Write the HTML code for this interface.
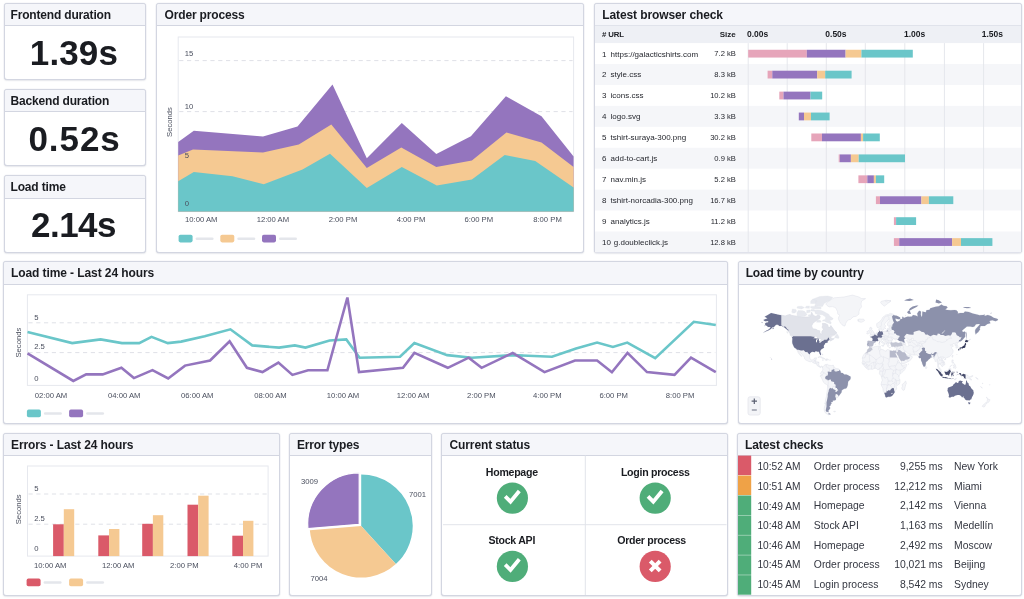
<!DOCTYPE html>
<html lang="en"><head><meta charset="utf-8"><title>Synthetic monitoring dashboard</title>
<style>
html,body{margin:0;padding:0;background:#fff}
body{width:1024px;height:599px;overflow:hidden;font-family:"Liberation Sans",sans-serif;color:#1a1c21}
#root{will-change:transform;position:relative;width:1024px;height:599px;overflow:hidden}
.p{position:absolute;box-sizing:border-box;border:1px solid #d3d6e1;border-radius:3px;background:#fff;box-shadow:0 0 1px rgba(150,156,185,.55),0 1px 1.5px rgba(120,125,150,.14)}
.ph{box-sizing:border-box;background:#f5f6fa;border-bottom:1px solid #d3d6e1;border-radius:2px 2px 0 0;padding-left:5.5px;display:flex;align-items:center}
.ph span{font-weight:bold;font-size:12px;color:#1a1c21;white-space:nowrap}
.t{position:absolute;white-space:nowrap}
svg{position:absolute;left:0;top:0;overflow:visible}

</style></head>
<body>
<div id="root">
<div class="p" style="left:4px;top:3px;width:142px;height:77px"><div class="ph" style="height:22px;padding-left:5.5px"><span style="letter-spacing:-0.17px">Frontend duration</span></div></div>
<div class="p" style="left:4px;top:89px;width:142px;height:77px"><div class="ph" style="height:22px;padding-left:5.5px"><span style="letter-spacing:-0.17px">Backend duration</span></div></div>
<div class="p" style="left:4px;top:175px;width:142px;height:78px"><div class="ph" style="height:22.5px;padding-left:5.5px"><span style="letter-spacing:-0.17px">Load time</span></div></div>
<div class="p" style="left:156px;top:3px;width:428px;height:250px"><div class="ph" style="height:22px;padding-left:7.6px"><span style="letter-spacing:-0.17px">Order process</span></div></div>
<div class="p" style="left:594px;top:3px;width:428px;height:250px"><div class="ph" style="height:22px;padding-left:7.2px"><span style="letter-spacing:-0.1px">Latest browser check</span></div></div>
<div class="p" style="left:3px;top:261px;width:725px;height:163px"><div class="ph" style="height:23px;padding-left:7px"><span style="letter-spacing:-0.09px">Load time - Last 24 hours</span></div></div>
<div class="p" style="left:738px;top:261px;width:284px;height:163px"><div class="ph" style="height:23px;padding-left:6.7px"><span style="letter-spacing:-0.17px">Load time by country</span></div></div>
<div class="p" style="left:3px;top:433px;width:277px;height:163px"><div class="ph" style="height:22px;padding-left:7px"><span style="letter-spacing:-0.11px">Errors - Last 24 hours</span></div></div>
<div class="p" style="left:289px;top:433px;width:143px;height:163px"><div class="ph" style="height:22px;padding-left:7px"><span style="letter-spacing:-0.17px">Error types</span></div></div>
<div class="p" style="left:441px;top:433px;width:287px;height:163px"><div class="ph" style="height:22px;padding-left:7.5px"><span style="letter-spacing:-0.1px">Current status</span></div></div>
<div class="p" style="left:737px;top:433px;width:285px;height:163px"><div class="ph" style="height:22px;padding-left:7px"><span style="letter-spacing:-0.08px">Latest checks</span></div></div>
<div class="t" style="left:-76.1px;width:300px;text-align:center;top:29.85px;font-size:35px;line-height:45.5px;font-weight:bold;color:#1a1c21;letter-spacing:0.1px;">1.39s</div>
<div class="t" style="left:-75.4px;width:300px;text-align:center;top:115.85px;font-size:35px;line-height:45.5px;font-weight:bold;color:#1a1c21;letter-spacing:0.95px;">0.52s</div>
<div class="t" style="left:-76.5px;width:300px;text-align:center;top:202.05px;font-size:35px;line-height:45.5px;font-weight:bold;color:#1a1c21;letter-spacing:-0.5px;">2.14s</div>
<svg width="1024" height="599" viewBox="0 0 1024 599" font-family="Liberation Sans, sans-serif"><rect x="178.2" y="37" width="395.40000000000003" height="174.6" fill="#fff" stroke="#e6e8ee" stroke-width="1"/>
<line x1="179.2" x2="572.6" y1="60.6" y2="60.6" stroke="#dfe1e7" stroke-width="1" stroke-dasharray="4.2 3.6"/>
<line x1="179.2" x2="572.6" y1="111.6" y2="111.6" stroke="#dfe1e7" stroke-width="1" stroke-dasharray="4.2 3.6"/>
<polygon points="178.2,142.0 193.8,130.8 263.0,136.5 297.5,126.5 332.5,84.5 366.8,158.3 401.8,123.0 436.3,153.9 470.9,136.3 505.9,96.3 541.5,116.3 573.6,156.4 573.6,211.6 178.2,211.6" fill="#9475be"/>
<polygon points="178.2,155.5 193.0,149.5 263.0,152.5 298.8,144.5 331.3,124.5 366.8,168.0 401.3,147.6 436.3,167.1 471.9,160.6 506.4,132.6 541.5,142.6 573.6,167.1 573.6,211.6 178.2,211.6" fill="#f5c992"/>
<polygon points="178.2,181.3 193.8,172.0 232.5,176.3 263.8,184.3 302.5,169.5 330.0,153.8 366.8,188.0 401.8,167.1 436.8,185.6 471.9,179.6 504.7,155.1 535.2,160.9 573.6,187.6 573.6,211.6 178.2,211.6" fill="#6ac6c9"/>
<text x="184.7" y="56.4" font-size="7.7" text-anchor="start" fill="#4a4f5e" >15</text>
<text x="184.7" y="109.2" font-size="7.7" text-anchor="start" fill="#4a4f5e" >10</text>
<text x="184.7" y="158.4" font-size="7.7" text-anchor="start" fill="#4a4f5e" >5</text>
<text x="184.7" y="205.5" font-size="7.7" text-anchor="start" fill="#4a4f5e" >0</text>
<text transform="translate(172.2,122) rotate(-90)" font-size="7.7" text-anchor="middle" fill="#4a4f5e">Seconds</text>
<text x="201.2" y="222.4" font-size="7.7" text-anchor="middle" fill="#4a4f5e" >10:00 AM</text>
<text x="272.9" y="222.4" font-size="7.7" text-anchor="middle" fill="#4a4f5e" >12:00 AM</text>
<text x="343" y="222.4" font-size="7.7" text-anchor="middle" fill="#4a4f5e" >2:00 PM</text>
<text x="411" y="222.4" font-size="7.7" text-anchor="middle" fill="#4a4f5e" >4:00 PM</text>
<text x="478.8" y="222.4" font-size="7.7" text-anchor="middle" fill="#4a4f5e" >6:00 PM</text>
<text x="547.5" y="222.4" font-size="7.7" text-anchor="middle" fill="#4a4f5e" >8:00 PM</text>
<rect x="178.6" y="234.8" width="14" height="7.6" rx="1.8" fill="#6ac6c9"/>
<rect x="195.6" y="237.4" width="18" height="2.6" rx="1.3" fill="#e4e6eb"/>
<rect x="220.3" y="234.8" width="14" height="7.6" rx="1.8" fill="#f5c992"/>
<rect x="237.3" y="237.4" width="18" height="2.6" rx="1.3" fill="#e4e6eb"/>
<rect x="262.0" y="234.8" width="14" height="7.6" rx="1.8" fill="#9475be"/>
<rect x="279.0" y="237.4" width="18" height="2.6" rx="1.3" fill="#e4e6eb"/>
<rect x="595" y="25.5" width="426" height="17.6" fill="#eef0f5"/>
<rect x="595" y="64.03" width="426" height="20.93" fill="#f5f6f9"/>
<rect x="595" y="105.89" width="426" height="20.93" fill="#f5f6f9"/>
<rect x="595" y="147.75" width="426" height="20.93" fill="#f5f6f9"/>
<rect x="595" y="189.61" width="426" height="20.93" fill="#f5f6f9"/>
<rect x="595" y="231.47" width="426" height="20.93" fill="#f5f6f9"/>
<line x1="748.2" x2="748.2" y1="43.1" y2="252" stroke="#e5e7ec" stroke-width="1"/>
<line x1="787.2" x2="787.2" y1="43.1" y2="252" stroke="#e5e7ec" stroke-width="1"/>
<line x1="826.3" x2="826.3" y1="43.1" y2="252" stroke="#e5e7ec" stroke-width="1"/>
<line x1="865.3" x2="865.3" y1="43.1" y2="252" stroke="#e5e7ec" stroke-width="1"/>
<line x1="904.8" x2="904.8" y1="43.1" y2="252" stroke="#e5e7ec" stroke-width="1"/>
<line x1="944.4" x2="944.4" y1="43.1" y2="252" stroke="#e5e7ec" stroke-width="1"/>
<line x1="983.6" x2="983.6" y1="43.1" y2="252" stroke="#e5e7ec" stroke-width="1"/>
<text x="602" y="56.565" font-size="8.0" text-anchor="start" fill="#25272e" >1</text>
<text x="610.6" y="56.565" font-size="8.0" text-anchor="start" fill="#25272e" >https://galacticshirts.com</text>
<text x="735.9" y="56.464999999999996" font-size="7.6" text-anchor="end" fill="#25272e" >7.2 kB</text>
<rect x="748.2" y="49.76" width="58.6" height="7.8" fill="#e6a5ba"/>
<rect x="806.8" y="49.76" width="38.8" height="7.8" fill="#9475be"/>
<rect x="845.6" y="49.76" width="15.8" height="7.8" fill="#f5c992"/>
<rect x="861.4" y="49.76" width="51.4" height="7.8" fill="#6ac6c9"/>
<text x="602" y="77.495" font-size="8.0" text-anchor="start" fill="#25272e" >2</text>
<text x="610.6" y="77.495" font-size="8.0" text-anchor="start" fill="#25272e" >style.css</text>
<text x="735.9" y="77.39500000000001" font-size="7.6" text-anchor="end" fill="#25272e" >8.3 kB</text>
<rect x="767.6" y="70.70" width="4.7" height="7.8" fill="#e6a5ba"/>
<rect x="772.3" y="70.70" width="44.9" height="7.8" fill="#9475be"/>
<rect x="817.2" y="70.70" width="8.0" height="7.8" fill="#f5c992"/>
<rect x="825.2" y="70.70" width="26.4" height="7.8" fill="#6ac6c9"/>
<text x="602" y="98.42500000000001" font-size="8.0" text-anchor="start" fill="#25272e" >3</text>
<text x="610.6" y="98.42500000000001" font-size="8.0" text-anchor="start" fill="#25272e" >icons.css</text>
<text x="735.9" y="98.32500000000002" font-size="7.6" text-anchor="end" fill="#25272e" >10.2 kB</text>
<rect x="779.3" y="91.63" width="4.2" height="7.8" fill="#e6a5ba"/>
<rect x="783.5" y="91.63" width="27.0" height="7.8" fill="#9475be"/>
<rect x="810.5" y="91.63" width="11.7" height="7.8" fill="#6ac6c9"/>
<text x="602" y="119.355" font-size="8.0" text-anchor="start" fill="#25272e" >4</text>
<text x="610.6" y="119.355" font-size="8.0" text-anchor="start" fill="#25272e" >logo.svg</text>
<text x="735.9" y="119.25500000000001" font-size="7.6" text-anchor="end" fill="#25272e" >3.3 kB</text>
<rect x="798.8" y="112.56" width="5.2" height="7.8" fill="#9475be"/>
<rect x="804.0" y="112.56" width="7.0" height="7.8" fill="#f5c992"/>
<rect x="811.0" y="112.56" width="18.6" height="7.8" fill="#6ac6c9"/>
<text x="602" y="140.285" font-size="8.0" text-anchor="start" fill="#25272e" >5</text>
<text x="610.6" y="140.285" font-size="8.0" text-anchor="start" fill="#25272e" >tshirt-suraya-300.png</text>
<text x="735.9" y="140.185" font-size="7.6" text-anchor="end" fill="#25272e" >30.2 kB</text>
<rect x="811.3" y="133.49" width="10.7" height="7.8" fill="#e6a5ba"/>
<rect x="822.0" y="133.49" width="38.9" height="7.8" fill="#9475be"/>
<rect x="860.9" y="133.49" width="2.2" height="7.8" fill="#f5c992"/>
<rect x="863.1" y="133.49" width="16.7" height="7.8" fill="#6ac6c9"/>
<text x="602" y="161.215" font-size="8.0" text-anchor="start" fill="#25272e" >6</text>
<text x="610.6" y="161.215" font-size="8.0" text-anchor="start" fill="#25272e" >add-to-cart.js</text>
<text x="735.9" y="161.115" font-size="7.6" text-anchor="end" fill="#25272e" >0.9 kB</text>
<rect x="838.7" y="154.42" width="1.1" height="7.8" fill="#e6a5ba"/>
<rect x="839.8" y="154.42" width="11.1" height="7.8" fill="#9475be"/>
<rect x="850.9" y="154.42" width="7.8" height="7.8" fill="#f5c992"/>
<rect x="858.7" y="154.42" width="46.3" height="7.8" fill="#6ac6c9"/>
<text x="602" y="182.145" font-size="8.0" text-anchor="start" fill="#25272e" >7</text>
<text x="610.6" y="182.145" font-size="8.0" text-anchor="start" fill="#25272e" >nav.min.js</text>
<text x="735.9" y="182.04500000000002" font-size="7.6" text-anchor="end" fill="#25272e" >5.2 kB</text>
<rect x="858.4" y="175.35" width="8.9" height="7.8" fill="#e6a5ba"/>
<rect x="867.3" y="175.35" width="6.6" height="7.8" fill="#9475be"/>
<rect x="873.9" y="175.35" width="2.0" height="7.8" fill="#f5c992"/>
<rect x="875.9" y="175.35" width="8.3" height="7.8" fill="#6ac6c9"/>
<text x="602" y="203.075" font-size="8.0" text-anchor="start" fill="#25272e" >8</text>
<text x="610.6" y="203.075" font-size="8.0" text-anchor="start" fill="#25272e" >tshirt-norcadia-300.png</text>
<text x="735.9" y="202.975" font-size="7.6" text-anchor="end" fill="#25272e" >16.7 kB</text>
<rect x="875.9" y="196.28" width="4.1" height="7.8" fill="#e6a5ba"/>
<rect x="880.0" y="196.28" width="41.4" height="7.8" fill="#9475be"/>
<rect x="921.4" y="196.28" width="7.5" height="7.8" fill="#f5c992"/>
<rect x="928.9" y="196.28" width="24.4" height="7.8" fill="#6ac6c9"/>
<text x="602" y="224.005" font-size="8.0" text-anchor="start" fill="#25272e" >9</text>
<text x="610.6" y="224.005" font-size="8.0" text-anchor="start" fill="#25272e" >analytics.js</text>
<text x="735.9" y="223.905" font-size="7.6" text-anchor="end" fill="#25272e" >11.2 kB</text>
<rect x="893.9" y="217.21" width="2.2" height="7.8" fill="#e6a5ba"/>
<rect x="896.1" y="217.21" width="20.0" height="7.8" fill="#6ac6c9"/>
<text x="602" y="244.935" font-size="8.0" text-anchor="start" fill="#25272e" >10</text>
<text x="613.8" y="244.935" font-size="8.0" text-anchor="start" fill="#25272e" >g.doubleclick.js</text>
<text x="735.9" y="244.835" font-size="7.6" text-anchor="end" fill="#25272e" >12.8 kB</text>
<rect x="893.9" y="238.14" width="5.3" height="7.8" fill="#e6a5ba"/>
<rect x="899.2" y="238.14" width="52.9" height="7.8" fill="#9475be"/>
<rect x="952.1" y="238.14" width="8.9" height="7.8" fill="#f5c992"/>
<rect x="961.0" y="238.14" width="31.4" height="7.8" fill="#6ac6c9"/>
<text x="602" y="37.3" font-size="7.8" text-anchor="start" fill="#1a1c21" font-weight="bold" letter-spacing="-0.1"># URL</text>
<text x="735.8" y="37.3" font-size="8.0" text-anchor="end" fill="#1a1c21" font-weight="bold">Size</text>
<text x="747" y="37.3" font-size="8.5" text-anchor="start" fill="#1a1c21" font-weight="bold">0.00s</text>
<text x="825.3" y="37.3" font-size="8.5" text-anchor="start" fill="#1a1c21" font-weight="bold">0.50s</text>
<text x="904" y="37.3" font-size="8.5" text-anchor="start" fill="#1a1c21" font-weight="bold">1.00s</text>
<text x="981.7" y="37.3" font-size="8.5" text-anchor="start" fill="#1a1c21" font-weight="bold">1.50s</text>
<rect x="27.4" y="294.8" width="689.0" height="90.59999999999997" fill="#fff" stroke="#e6e8ee" stroke-width="1"/>
<line x1="28.4" x2="715.4" y1="322.8" y2="322.8" stroke="#dfe1e7" stroke-width="1" stroke-dasharray="4.2 3.6"/>
<line x1="28.4" x2="715.4" y1="352.6" y2="352.6" stroke="#dfe1e7" stroke-width="1" stroke-dasharray="4.2 3.6"/>
<polyline points="27.5,331.9 72.2,343.1 100.6,339.4 122.0,343.1 139.2,343.1 151.5,336.8 167.8,343.1 181.1,341.6 204.7,336.2 230.4,329.3 252.2,345.4 279.1,347.6 294.8,345.4 305.5,347.6 329.6,340.5 346.3,339.4 359.6,357.7 400.0,356.8 414.4,343.1 447.2,355.1 471.9,357.7 512.7,355.1 552.0,356.8 576.1,348.4 597.1,342.6 612.9,346.9 627.3,342.6 655.2,358.1 693.8,321.8 715.8,325.0" fill="none" stroke="#6ac6c9" stroke-width="2.6" stroke-linejoin="miter"/>
<polyline points="27.5,353.4 73.3,380.9 86.2,374.4 102.7,374.4 121.4,367.8 133.9,378.1 152.5,370.1 168.2,378.5 185.0,365.6 210.1,360.5 229.6,341.3 246.9,367.8 262.5,372.1 278.4,362.6 292.4,374.9 308.1,370.3 327.4,370.3 347.4,297.5 359.0,372.1 403.0,367.8 414.4,352.9 447.8,367.8 468.7,357.7 481.6,367.8 512.7,352.9 544.5,372.1 575.0,360.5 597.1,360.5 611.9,372.2 627.5,352.9 647.0,372.1 674.5,374.9 691.0,357.7 715.8,372.1" fill="none" stroke="#9475be" stroke-width="2.6" stroke-linejoin="miter"/>
<text x="34.2" y="319.7" font-size="7.7" text-anchor="start" fill="#4a4f5e" >5</text>
<text x="34.2" y="349.2" font-size="7.7" text-anchor="start" fill="#4a4f5e" >2.5</text>
<text x="34.2" y="381.40000000000003" font-size="7.7" text-anchor="start" fill="#4a4f5e" >0</text>
<text transform="translate(21.4,342.6) rotate(-90)" font-size="7.7" text-anchor="middle" fill="#4a4f5e">Seconds</text>
<text x="51" y="398" font-size="7.7" text-anchor="middle" fill="#4a4f5e" >02:00 AM</text>
<text x="124.2" y="398" font-size="7.7" text-anchor="middle" fill="#4a4f5e" >04:00 AM</text>
<text x="197.3" y="398" font-size="7.7" text-anchor="middle" fill="#4a4f5e" >06:00 AM</text>
<text x="270.5" y="398" font-size="7.7" text-anchor="middle" fill="#4a4f5e" >08:00 AM</text>
<text x="343" y="398" font-size="7.7" text-anchor="middle" fill="#4a4f5e" >10:00 AM</text>
<text x="413.1" y="398" font-size="7.7" text-anchor="middle" fill="#4a4f5e" >12:00 AM</text>
<text x="481.3" y="398" font-size="7.7" text-anchor="middle" fill="#4a4f5e" >2:00 PM</text>
<text x="547.3" y="398" font-size="7.7" text-anchor="middle" fill="#4a4f5e" >4:00 PM</text>
<text x="613.7" y="398" font-size="7.7" text-anchor="middle" fill="#4a4f5e" >6:00 PM</text>
<text x="680.1" y="398" font-size="7.7" text-anchor="middle" fill="#4a4f5e" >8:00 PM</text>
<rect x="26.9" y="409.6" width="14" height="7.6" rx="1.8" fill="#6ac6c9"/>
<rect x="43.9" y="412.20000000000005" width="18" height="2.6" rx="1.3" fill="#e4e6eb"/>
<rect x="69.1" y="409.6" width="14" height="7.6" rx="1.8" fill="#9475be"/>
<rect x="86.1" y="412.20000000000005" width="18" height="2.6" rx="1.3" fill="#e4e6eb"/>
<rect x="27.5" y="466" width="240.60000000000002" height="90.10000000000002" fill="#fff" stroke="#e6e8ee" stroke-width="1"/>
<line x1="28.5" x2="267.1" y1="494" y2="494" stroke="#dfe1e7" stroke-width="1" stroke-dasharray="4.2 3.6"/>
<line x1="28.5" x2="267.1" y1="524.2" y2="524.2" stroke="#dfe1e7" stroke-width="1" stroke-dasharray="4.2 3.6"/>
<rect x="53.1" y="524.3" width="10.7" height="31.8" fill="#da5a69"/>
<rect x="63.8" y="509.2" width="10.4" height="46.9" fill="#f5c992"/>
<rect x="98.3" y="535.4" width="10.7" height="20.7" fill="#da5a69"/>
<rect x="109.0" y="529" width="10.4" height="27.1" fill="#f5c992"/>
<rect x="142.2" y="523.8" width="10.7" height="32.3" fill="#da5a69"/>
<rect x="152.9" y="515.2" width="10.4" height="40.9" fill="#f5c992"/>
<rect x="187.5" y="504.7" width="10.7" height="51.4" fill="#da5a69"/>
<rect x="198.2" y="495.7" width="10.4" height="60.4" fill="#f5c992"/>
<rect x="232.3" y="535.7" width="10.7" height="20.4" fill="#da5a69"/>
<rect x="243.0" y="520.8" width="10.4" height="35.3" fill="#f5c992"/>
<text x="34.2" y="491.2" font-size="7.7" text-anchor="start" fill="#4a4f5e" >5</text>
<text x="34.2" y="521.1999999999999" font-size="7.7" text-anchor="start" fill="#4a4f5e" >2.5</text>
<text x="34.2" y="551.3" font-size="7.7" text-anchor="start" fill="#4a4f5e" >0</text>
<text transform="translate(21.4,509.3) rotate(-90)" font-size="7.7" text-anchor="middle" fill="#4a4f5e">Seconds</text>
<text x="50.2" y="568.4" font-size="7.7" text-anchor="middle" fill="#4a4f5e" >10:00 AM</text>
<text x="118.3" y="568.4" font-size="7.7" text-anchor="middle" fill="#4a4f5e" >12:00 AM</text>
<text x="184.3" y="568.4" font-size="7.7" text-anchor="middle" fill="#4a4f5e" >2:00 PM</text>
<text x="248.1" y="568.4" font-size="7.7" text-anchor="middle" fill="#4a4f5e" >4:00 PM</text>
<rect x="26.6" y="578.6" width="14" height="7.6" rx="1.8" fill="#da5a69"/>
<rect x="43.6" y="581.2" width="18" height="2.6" rx="1.3" fill="#e4e6eb"/>
<rect x="69.1" y="578.6" width="14" height="7.6" rx="1.8" fill="#f5c992"/>
<rect x="86.1" y="581.2" width="18" height="2.6" rx="1.3" fill="#e4e6eb"/>
<path d="M361.20,526.00 L361.20,474.50 A51.5,51.5 0 0 1 395.86,564.09 Z" fill="#6ac6c9"/>
<path d="M361.20,526.00 L395.86,564.09 A51.5,51.5 0 0 1 309.87,530.22 Z" fill="#f5c992"/>
<path d="M359.20,524.30 L307.87,528.52 A51.5,51.5 0 0 1 359.20,472.80 Z" fill="#9475be" stroke="#fff" stroke-width="1.2"/>
<text x="301" y="483.8" font-size="7.7" text-anchor="start" fill="#4a4f5e" >3009</text>
<text x="409" y="496.8" font-size="7.7" text-anchor="start" fill="#4a4f5e" >7001</text>
<text x="310.4" y="581.4" font-size="7.7" text-anchor="start" fill="#4a4f5e" >7004</text>
<line x1="585.3" x2="585.3" y1="455.5" y2="595" stroke="#e2e4ea" stroke-width="1"/>
<line x1="443" x2="726.5" y1="524.7" y2="524.7" stroke="#e2e4ea" stroke-width="1"/>
<circle cx="512.4" cy="498.1" r="15.6" fill="#4fad79"/>
<polyline points="505.2,496.4 510.5,501.7 519.3,491.0" fill="none" stroke="#fff" stroke-width="3.8" stroke-linejoin="miter" stroke-linecap="butt"/>
<circle cx="655.2" cy="498.1" r="15.6" fill="#4fad79"/>
<polyline points="648.0,496.4 653.3,501.7 662.1,491.0" fill="none" stroke="#fff" stroke-width="3.8" stroke-linejoin="miter" stroke-linecap="butt"/>
<circle cx="512.4" cy="566.4" r="15.6" fill="#4fad79"/>
<polyline points="505.2,564.7 510.5,570.0 519.3,559.3" fill="none" stroke="#fff" stroke-width="3.8" stroke-linejoin="miter" stroke-linecap="butt"/>
<circle cx="655.2" cy="566.4" r="15.6" fill="#da5a69"/>
<path d="M650.3,561.1 L660.1,570.9 M660.1,561.1 L650.3,570.9" fill="none" stroke="#fff" stroke-width="4" stroke-linecap="butt"/>
<rect x="738" y="455.60" width="13.2" height="19.53" fill="#da5a69"/>
<rect x="738" y="475.53" width="13.2" height="19.53" fill="#efa247"/>
<rect x="738" y="495.46" width="13.2" height="19.53" fill="#4fad79"/>
<rect x="738" y="515.39" width="13.2" height="19.53" fill="#4fad79"/>
<rect x="738" y="535.32" width="13.2" height="19.53" fill="#4fad79"/>
<rect x="738" y="555.25" width="13.2" height="19.53" fill="#4fad79"/>
<rect x="738" y="575.18" width="13.2" height="19.53" fill="#4fad79"/>
<g id="worldmap">
<path d="M763.4,319.9L766.2,318.8L767.5,318.9L766.2,317.6L764.6,316.8L766.9,315.4L771.1,313.1L775.4,314.1L781.3,315.2L785.2,316.0L789.8,314.4L791.7,315.4L798.2,316.5L802.8,317.1L808.0,317.1L810.7,316.5L811.6,312.3L813.3,315.4L815.9,316.5L817.9,315.0L820.1,316.0L819.8,318.3L817.2,319.4L816.5,320.6L814.6,321.7L812.6,323.8L811.6,325.9L812.0,327.2L813.0,328.9L815.9,329.3L817.9,330.5L819.7,330.8L819.8,332.8L821.1,334.3L821.8,333.6L822.0,331.3L823.4,329.3L822.1,327.2L822.8,325.4L822.4,323.4L825.0,323.5L827.7,324.8L828.0,326.9L829.6,327.6L830.9,325.6L832.9,328.4L834.2,330.3L835.8,331.7L836.8,333.1L835.2,334.3L834.2,335.2L830.9,335.2L829.6,336.0L827.7,337.6L830.9,336.3L831.4,336.4L830.9,337.6L831.2,338.7L833.5,339.2L834.2,338.2L832.2,340.0L830.3,341.0L830.3,339.9L829.6,339.6L829.6,339.9L827.7,340.9L827.7,342.4L826.7,342.8L825.0,343.3L824.9,344.2L824.1,345.0L823.7,346.2L824.1,347.6L822.8,348.4L821.4,349.3L820.5,350.4L820.2,351.6L820.9,353.4L821.1,354.7L820.5,355.2L819.8,354.1L819.3,353.0L819.2,352.2L818.3,351.6L817.5,351.7L816.2,351.3L814.9,351.4L815.1,352.2L813.9,352.1L812.1,351.8L811.3,352.2L810.0,353.2L809.9,354.5L809.5,357.0L810.0,358.5L810.7,359.5L811.6,360.1L813.3,359.8L814.1,359.2L814.3,358.1L816.5,357.8L816.2,359.2L815.9,359.9L815.7,360.9L815.4,361.7L817.2,361.8L819.0,362.3L818.8,364.1L818.7,365.1L819.5,366.1L820.5,366.6L821.4,366.1L822.8,366.7L822.5,367.7L821.4,366.6L820.8,367.7L819.3,367.0L817.4,365.8L816.2,363.8L814.7,363.4L813.1,362.7L811.6,361.5L810.3,361.9L808.1,361.1L805.8,360.0L804.5,358.8L804.6,357.8L803.8,356.5L802.5,355.0L801.8,354.0L801.2,353.1L800.1,352.3L799.6,350.7L798.4,350.2L798.6,351.6L799.7,353.0L800.9,354.9L801.8,356.6L801.3,356.3L800.2,355.4L798.9,353.8L798.2,352.7L797.6,351.2L796.9,349.7L796.0,348.5L794.7,348.1L793.7,346.4L793.3,345.6L792.4,343.6L792.2,341.8L792.4,338.7L791.9,336.8L793.0,336.9L793.0,336.3L792.9,336.0L790.4,334.5L789.8,333.1L788.2,331.3L787.8,330.3L786.2,328.9L784.5,327.4L783.5,326.9L781.9,326.1L779.3,325.9L778.0,324.8L776.0,324.8L774.2,326.7L773.1,327.4L772.8,327.1L770.8,328.9L768.8,330.3L766.9,331.1L764.6,332.1L763.3,332.7L764.9,331.5L766.6,330.6L768.2,329.8L769.8,328.4L770.6,327.1L769.8,327.1L767.5,327.1L767.5,325.9L765.6,325.4L764.9,323.8L765.9,322.7L768.2,322.2L768.2,321.1L765.6,321.2L764.6,321.0L763.4,319.9ZM825.7,303.8L829.0,301.0L834.2,297.8L844.0,297.0L852.5,295.1L859.0,297.0L861.6,298.6L865.6,298.6L861.6,301.0L861.0,304.0L861.6,306.9L859.7,309.0L859.0,311.6L859.0,314.1L856.4,316.2L853.1,316.9L850.5,319.4L848.6,319.8L846.9,321.1L845.6,323.8L845.0,325.9L844.0,326.0L842.0,324.8L840.7,323.3L839.7,321.7L838.4,318.9L838.8,316.5L840.1,315.4L837.8,314.1L837.5,311.6L835.5,307.6L832.2,306.6L829.0,306.9L827.0,305.5ZM822.8,366.7L824.1,365.4L824.7,365.0L826.3,364.3L826.7,365.1L827.7,364.3L828.8,365.3L830.3,365.4L831.6,365.5L832.9,365.3L833.5,366.1L833.9,366.8L835.2,367.9L836.2,368.6L837.5,368.6L839.1,369.2L839.7,369.7L840.7,371.4L840.7,372.6L841.7,373.1L842.7,373.1L844.3,374.4L846.3,374.6L848.2,375.2L849.2,375.9L850.3,376.3L850.7,377.8L850.4,379.2L849.2,380.5L848.2,381.6L847.9,383.3L847.8,384.9L847.3,386.5L846.6,387.9L846.0,388.6L844.3,388.8L843.0,389.5L841.7,390.6L841.6,392.3L840.7,393.6L839.4,395.2L838.5,396.6L837.8,397.4L836.5,397.5L835.3,396.8L836.0,398.5L835.8,399.9L834.2,400.6L832.8,400.5L832.7,402.1L830.9,402.3L831.7,403.5L830.8,404.3L830.6,405.6L829.3,406.4L830.3,408.0L829.3,409.5L828.3,410.8L828.7,412.1L828.7,412.3L828.8,413.1L830.8,414.2L828.6,414.8L827.0,414.0L825.0,412.6L824.4,410.8L824.1,408.6L824.7,406.4L825.7,403.9L825.2,402.7L825.4,401.1L825.6,399.3L826.0,397.9L826.6,396.0L826.7,393.7L827.0,391.9L827.3,390.1L827.5,387.9L827.5,385.3L826.7,384.6L824.4,383.3L823.5,382.2L822.9,380.9L822.1,379.2L821.3,377.4L820.3,376.6L820.3,375.7L820.9,374.9L821.1,374.4L820.5,373.7L820.9,372.6L821.1,372.1L821.9,371.6L822.1,370.9L822.8,370.1L822.8,368.9L822.5,367.7ZM833.5,411.3L835.5,411.2L835.2,411.9L833.9,411.8ZM869.5,347.1L872.0,347.7L873.4,347.1L875.4,346.4L878.0,346.2L879.9,346.0L880.6,346.4L880.1,348.3L880.6,349.1L881.9,349.4L883.4,349.8L884.8,350.9L886.1,351.3L886.5,350.1L887.8,349.4L889.7,350.3L892.4,350.9L893.7,350.4L894.5,350.7L895.7,350.6L896.2,351.9L895.8,353.2L895.0,352.7L894.6,351.6L895.3,353.2L896.6,356.0L897.6,358.1L897.8,359.7L898.6,360.2L899.2,362.0L900.3,362.7L901.6,364.1L901.7,364.8L902.5,365.5L904.1,365.0L906.9,364.5L906.7,365.5L905.9,367.2L904.8,369.6L903.5,371.1L901.8,372.6L900.6,373.8L899.7,374.6L899.0,375.9L898.8,377.1L899.2,377.4L899.1,378.5L899.9,379.8L899.9,382.6L899.4,384.0L897.6,384.9L896.3,386.5L896.6,387.9L896.6,389.3L895.0,390.4L894.9,391.4L894.6,392.6L893.7,393.7L893.0,394.7L892.0,395.9L890.7,396.6L890.1,396.8L888.1,396.8L886.5,397.4L885.4,396.9L885.3,395.9L884.6,393.7L884.2,392.7L883.3,391.5L882.9,388.3L881.9,386.5L881.1,384.6L881.6,381.9L882.4,380.2L881.9,378.8L881.4,376.7L881.1,375.7L879.8,374.4L879.2,373.1L879.6,372.0L879.8,370.6L879.2,369.6L878.0,369.6L877.3,369.7L876.3,368.3L875.0,368.3L874.1,368.6L872.2,369.4L871.4,369.2L870.1,369.1L868.5,369.6L867.5,369.2L865.9,367.9L864.9,366.9L864.7,366.1L863.6,365.1L862.5,364.1L862.0,362.5L862.6,361.6L862.7,359.5L862.3,358.1L862.9,356.3L863.9,354.5L864.9,353.3L865.9,352.7L866.9,351.9L867.1,350.8L867.8,349.1L869.0,348.5ZM905.6,380.9L906.4,383.3L905.7,384.7L904.4,389.9L903.0,390.4L902.0,389.0L901.7,387.9L902.4,386.5L902.2,384.4L903.8,383.3L904.8,381.9ZM867.4,341.2L868.2,340.8L871.1,341.0L872.2,341.0L872.6,340.0L872.7,338.9L872.0,337.8L870.5,337.3L870.3,336.7L871.4,336.4L872.4,336.5L872.2,335.6L872.6,335.9L873.5,335.8L874.4,335.1L874.4,334.6L875.0,334.4L875.7,334.1L876.1,333.4L876.5,332.7L877.3,332.2L878.0,332.2L879.0,332.0L879.2,331.4L879.0,330.8L878.7,330.2L878.8,328.9L879.6,328.7L880.3,328.2L880.1,329.3L880.5,329.6L879.8,330.5L879.9,331.0L880.6,331.7L881.6,331.3L882.7,331.8L884.2,331.3L885.5,331.0L886.2,331.3L886.5,330.9L887.1,330.5L887.1,329.1L887.5,328.4L888.2,328.2L889.3,328.7L889.3,327.6L888.8,326.7L889.7,326.4L891.7,326.4L893.1,326.0L892.0,325.4L890.4,325.5L888.4,326.0L887.5,325.4L887.3,323.3L888.1,322.2L890.0,320.6L889.1,319.7L887.8,320.0L887.3,321.1L886.1,322.4L884.8,323.5L884.6,324.8L885.7,325.9L885.5,326.6L884.4,327.3L884.2,328.9L883.9,329.6L882.9,329.8L882.7,330.4L881.9,330.4L881.6,329.6L881.1,328.3L880.7,326.9L880.3,326.6L878.6,327.8L878.0,327.9L877.0,327.1L876.7,325.4L876.7,323.8L877.6,322.9L879.0,322.2L880.3,321.1L881.6,319.4L882.9,317.1L884.2,316.2L885.8,315.0L888.4,314.4L890.3,313.4L892.0,313.8L893.7,314.4L893.5,315.0L895.0,315.5L896.9,315.8L900.2,317.6L900.2,318.9L898.2,319.3L895.6,318.6L895.3,318.9L896.1,321.1L897.6,321.8L898.2,321.2L899.9,321.0L899.5,320.0L900.8,319.0L902.2,319.1L902.3,316.8L903.5,316.9L903.7,318.3L904.8,317.5L908.0,316.5L909.0,316.8L912.0,316.5L912.9,315.1L915.6,315.6L917.2,316.2L917.8,316.5L917.2,313.5L919.1,310.7L921.0,311.4L920.8,314.7L921.6,317.1L922.1,316.0L922.4,311.6L924.4,312.0L926.0,312.3L926.3,310.3L929.6,309.8L930.3,308.3L935.5,306.8L938.8,306.2L941.6,304.5L943.3,305.8L946.6,306.2L947.6,307.6L945.3,309.6L947.2,310.0L950.8,310.3L954.4,310.0L956.4,310.3L958.0,312.0L957.7,313.5L960.3,312.9L963.6,312.9L964.9,311.6L968.8,311.9L971.4,312.9L972.7,313.6L978.0,314.7L979.3,315.2L983.2,315.0L984.8,314.6L984.5,316.0L987.8,315.0L991.0,316.1L993.6,317.7L996.3,318.5L998.0,319.2L997.7,320.2L995.6,321.2L992.3,320.2L991.0,320.6L989.4,320.9L990.4,323.3L987.4,324.0L984.8,325.9L982.2,326.0L980.6,326.0L980.1,327.8L979.6,328.1L980.1,329.6L979.1,330.8L978.0,332.5L977.0,332.7L975.8,334.5L975.3,333.1L975.1,330.8L975.7,328.9L976.7,327.9L978.9,325.5L980.2,324.3L978.3,324.0L976.0,324.2L974.4,326.4L972.7,326.9L970.1,326.5L966.9,326.6L965.2,327.9L963.6,329.3L961.8,331.1L963.3,331.9L964.8,331.5L965.7,332.5L965.2,334.5L965.2,336.7L963.7,338.6L961.9,340.5L960.3,341.5L959.5,341.2L958.8,342.0L958.2,342.8L956.7,344.0L957.3,345.0L958.0,346.2L958.0,347.4L956.7,348.0L956.0,348.1L956.1,346.6L955.9,345.7L954.9,345.3L955.3,344.2L954.6,343.8L953.1,343.4L952.8,344.6L951.2,344.5L950.3,344.8L951.1,345.8L952.3,345.6L953.5,346.0L952.1,346.8L951.4,347.8L952.1,348.9L953.0,350.2L953.1,351.6L952.8,352.7L951.8,354.1L950.8,355.5L949.5,356.7L948.0,357.2L946.3,357.8L945.5,358.6L945.1,357.8L944.0,357.7L943.1,358.5L942.5,359.7L943.7,361.4L944.2,361.6L944.8,363.7L944.8,364.7L943.5,365.5L943.1,366.1L942.0,366.7L941.9,365.8L941.0,365.4L940.4,364.4L939.4,363.9L939.1,363.4L938.8,364.4L938.3,365.6L938.8,366.8L939.1,367.7L940.1,368.4L941.0,369.6L941.0,370.9L941.5,371.7L941.0,371.8L939.6,370.7L939.0,368.9L938.5,368.1L937.6,367.0L937.8,365.5L937.9,364.1L937.2,362.3L937.2,361.3L936.1,361.1L935.2,361.6L935.0,359.9L933.7,358.3L933.4,357.1L932.5,357.2L931.6,357.5L930.3,357.8L930.1,358.6L928.9,359.3L927.2,361.2L925.9,362.0L925.8,363.5L925.5,365.6L925.0,366.3L924.5,366.6L924.0,367.1L923.3,365.9L922.4,364.1L922.0,362.5L921.1,360.6L921.0,359.4L920.9,358.1L920.6,358.0L919.5,358.2L918.5,357.2L919.3,356.7L918.0,356.2L917.3,355.4L916.9,354.9L913.9,355.1L911.3,354.8L910.6,353.9L910.2,353.6L909.0,354.1L907.7,353.4L906.6,352.3L906.1,351.4L905.4,351.3L904.8,351.7L905.0,352.4L905.4,353.4L906.2,354.1L906.1,355.2L906.9,354.4L907.1,355.2L906.9,355.8L908.7,355.8L910.1,354.4L910.3,355.5L911.8,356.2L912.5,357.0L911.6,358.5L911.1,359.5L910.2,360.3L909.3,360.9L907.5,361.9L905.4,363.0L902.8,363.9L901.8,363.9L901.4,362.3L901.3,361.4L900.5,360.2L899.0,357.9L898.4,356.1L897.4,354.7L896.4,353.0L896.2,351.9L895.7,350.6L896.2,349.7L896.7,348.4L896.9,347.1L897.1,346.4L895.9,346.4L894.6,346.9L893.4,346.4L892.4,346.8L891.2,346.4L891.2,345.0L890.6,344.2L890.5,343.7L891.0,343.4L892.4,343.0L894.0,342.8L895.3,342.2L896.3,342.2L897.3,342.8L898.6,343.0L900.5,342.6L900.7,341.8L899.5,341.0L898.4,340.2L897.6,339.7L897.4,339.4L898.2,338.4L899.1,337.9L897.9,337.9L896.3,338.7L896.6,339.4L895.3,340.1L894.6,339.4L895.4,338.8L894.0,338.3L893.5,338.4L892.8,339.4L892.1,340.7L891.6,341.5L891.7,342.2L892.4,342.8L890.6,343.3L889.1,343.2L888.9,343.8L888.3,343.4L888.4,344.4L889.1,345.4L888.4,346.6L887.6,346.4L887.3,345.2L886.5,344.1L886.1,342.8L885.9,342.2L884.8,341.4L883.4,340.3L882.9,339.5L882.4,339.2L881.4,339.4L881.5,340.4L882.4,341.0L882.7,342.0L883.9,342.3L885.4,343.7L885.4,343.9L884.5,343.4L884.2,344.1L884.6,344.6L884.2,345.2L883.7,345.4L883.9,344.6L883.6,343.8L882.7,343.3L881.6,342.6L880.6,341.8L880.1,341.0L879.2,340.2L878.3,340.7L877.3,341.3L876.0,341.0L875.4,341.8L875.5,342.3L873.9,343.2L873.2,344.2L873.5,344.8L872.9,345.7L872.1,346.4L870.5,346.4L869.7,347.0L869.3,346.5L868.6,346.0L867.6,346.2L867.6,345.0L867.2,344.8L867.6,343.0ZM869.7,335.3L871.1,335.1L872.7,334.7L874.3,334.3L874.5,332.9L873.6,332.7L873.3,331.4L872.4,330.6L872.1,329.8L871.6,329.5L872.1,328.3L870.8,328.3L871.4,327.3L870.1,327.3L869.5,328.6L869.8,329.8L870.3,330.8L871.2,330.9L871.4,331.8L871.4,332.4L870.5,332.5L870.7,333.1L870.0,333.8L871.1,334.1L871.4,334.3L870.6,334.5ZM869.3,333.4L869.5,332.2L869.8,331.3L869.3,330.6L868.2,330.6L867.8,331.4L866.9,331.5L866.9,332.3L867.3,332.7L866.7,333.6L867.1,334.0L868.2,333.8ZM857.5,319.9L859.0,319.0L861.6,319.2L863.6,319.1L864.6,320.6L863.6,321.3L861.3,322.3L859.7,321.9L858.6,321.7L859.0,321.1L857.7,320.7L859.0,320.2ZM880.6,302.6L883.2,305.5L884.5,306.1L887.1,304.0L891.0,301.0L886.5,300.2L881.2,301.3ZM881.6,345.4L883.6,345.3L883.3,346.4L881.6,345.7ZM878.8,343.0L879.7,343.0L879.7,344.5L878.9,344.6ZM894.5,347.8L895.9,347.3L895.3,348.0ZM888.8,347.4L890.6,347.5L889.4,347.8ZM925.7,366.0L926.9,367.5L926.3,368.6L925.7,368.6L925.5,367.2ZM952.5,355.1L953.1,355.2L952.4,357.4L951.9,356.7ZM944.4,359.3L945.6,358.8L945.9,359.1L945.0,360.1ZM952.0,359.9L953.3,360.0L952.9,361.7L954.4,363.8L953.5,363.1L952.2,363.1L951.8,361.4ZM953.1,367.9L954.1,366.7L955.4,365.9L956.1,367.5L955.4,368.7L954.4,367.9ZM954.6,364.1L955.5,365.1L955.1,365.8L954.6,365.1ZM953.1,364.6L953.9,365.8L953.6,366.4L953.1,365.5ZM950.0,366.9L951.5,365.3L951.6,364.9L950.5,366.1ZM817.9,357.5L819.3,356.7L820.9,356.6L822.9,357.6L824.9,358.7L822.7,358.9L822.2,358.4L821.8,357.8L819.8,357.1ZM824.8,359.9L825.7,358.9L827.7,359.0L828.7,359.8L827.7,360.0L826.7,360.4ZM822.2,360.0L823.5,360.1L823.1,360.4ZM829.5,360.0L830.5,360.0L829.9,360.3ZM822.1,354.0L822.8,354.1L822.6,355.2ZM833.0,365.3L833.6,365.3L833.4,365.7ZM986.3,397.2L987.3,397.8L988.1,398.7L988.4,399.6L989.9,399.6L989.6,400.8L989.0,401.7L988.0,402.8L987.6,402.2L987.9,401.5L987.0,400.9L987.6,399.9L987.4,398.9ZM986.3,401.9L987.2,402.5L986.5,403.9L985.3,405.0L985.0,406.4L983.5,407.0L982.2,406.3L983.3,404.8L984.8,403.8L985.5,402.9ZM980.6,386.6L982.4,387.9L982.2,388.1L980.7,387.0ZM989.3,384.7L990.1,384.7L989.7,385.2ZM975.7,377.4L978.3,379.0L978.0,379.3L975.7,377.8ZM970.3,376.5L972.7,375.5L972.9,376.2L971.1,377.0ZM982.2,383.0L982.7,383.2L982.9,384.0L982.5,383.7ZM965.5,374.4L967.8,375.3L968.7,376.3L970.1,377.2L970.2,378.3L971.9,379.7L971.4,379.9L969.8,379.5L968.8,378.3L967.8,377.8L967.0,378.3L966.9,378.9L965.5,378.9ZM945.0,371.3L946.1,370.8L947.2,370.5L948.2,369.5L948.9,368.9L949.7,367.9L950.3,368.2L951.3,369.1L950.5,369.7L950.2,369.8L948.9,369.8L948.7,370.6L948.4,371.1L947.9,371.6L947.1,371.6L946.5,372.0L945.6,372.0ZM955.1,378.9L956.4,378.4L956.4,378.7L955.2,379.2ZM771.5,358.7L772.1,359.0L771.7,359.5L771.5,359.1ZM770.0,357.7L770.3,357.8L770.2,358.0ZM968.8,340.1L970.6,339.2L970.4,339.5L968.9,340.4ZM908.3,364.0L909.0,364.0L908.7,364.2ZM899.0,376.6L899.2,376.9L899.1,377.0ZM885.2,300.7L891.0,300.6L889.1,302.1L885.8,301.6ZM885.3,328.0L885.8,328.1L885.4,328.9ZM875.0,344.1L875.6,344.0L875.4,344.4ZM824.9,402.9L825.4,403.1L825.3,404.3L824.8,403.9ZM761.2,322.3L763.0,322.5L762.2,322.8ZM764.1,325.7L765.0,325.7L764.8,326.1ZM772.4,328.4L773.9,328.0L773.6,328.7L772.6,329.1Z" fill="#f4f5f8" stroke="#dee0e8" stroke-width="0.5" stroke-linejoin="round"/>
<path d="M813.1,362.7L813.9,361.6L814.3,360.4L815.1,360.4L815.7,359.9M815.1,360.4L815.1,361.7L815.4,361.7M814.7,363.4L815.0,362.8L815.6,362.4L816.1,363.2L816.2,363.8M819.0,362.3L817.9,362.6L816.7,363.2L816.1,363.2M818.7,365.1L817.4,365.0M819.5,366.1L819.2,367.0M826.3,364.3L826.0,366.5L827.7,367.9L829.3,368.4L829.6,371.8M821.9,371.6L824.1,372.6L825.7,374.2L827.7,375.6M820.9,375.0L821.8,376.1L822.4,374.7L824.1,372.6M827.5,385.3L828.0,384.6L828.3,383.3L828.3,381.2L828.5,380.2M828.0,384.7L828.6,386.1L829.1,388.5L829.6,388.6M832.4,388.0L832.9,386.5L835.4,386.3M836.0,368.6L835.8,370.3L836.5,371.4M838.1,368.7L837.9,370.3L838.1,371.1M833.9,366.8L833.5,368.2L833.7,369.1M826.5,359.0L826.5,360.2M864.9,353.3L867.7,353.3L867.7,354.5L865.6,354.5L865.6,356.3L864.9,356.7L864.9,357.9L862.3,358.1M867.7,353.6L870.3,355.2L874.2,358.0L874.6,358.6L875.5,359.0L875.6,359.5L876.1,359.5L877.2,359.2L878.3,358.2L881.2,356.3M879.0,346.3L878.8,348.1L878.3,348.9L879.3,350.1L879.6,351.3L879.9,354.1L881.2,356.3L882.7,357.0L883.2,356.7L889.1,359.2L889.1,358.8L889.7,358.8L889.7,357.4M880.9,349.2L880.1,350.4L879.6,351.3M870.3,355.2L869.2,355.2L869.8,361.3L869.8,362.0L865.9,362.0L865.4,362.5L863.9,361.2L862.6,361.6M876.1,359.5L876.1,361.6L875.7,362.0L874.1,362.3L873.5,362.3L873.1,362.3L872.1,362.9L870.8,363.5L869.8,364.6L869.8,365.6L868.2,365.7L868.0,364.9L866.7,364.3L865.9,364.1L865.4,362.5M883.2,356.7L883.5,358.1L883.5,361.0L882.2,362.7L882.5,363.7L882.9,363.9L883.2,365.1L882.5,365.8L883.5,367.5L882.9,368.6L882.9,369.4L883.9,371.1L882.1,371.1L880.8,371.1L879.8,371.1M875.7,362.0L875.8,364.6L875.2,366.5L875.2,368.3M873.5,362.3L874.0,365.1L874.4,366.5L874.2,368.5M871.6,365.1L871.6,367.3L871.4,369.2M868.2,365.7L867.8,367.5L868.5,369.6M866.7,364.3L866.4,365.6L867.3,366.8L866.7,367.0L865.9,367.9M864.7,366.1L866.2,365.8L866.4,365.6M862.5,364.1L864.4,364.0L864.4,363.3L862.6,363.3M863.6,365.1L864.4,364.6L864.4,364.0M875.8,364.6L877.3,363.2L879.3,363.9L881.6,363.6L882.2,362.7M879.2,369.6L879.3,368.2L880.9,368.1L882.0,365.8L882.9,363.9M889.1,359.2L889.1,361.9L888.1,363.7L888.4,365.1L888.9,366.7L891.4,366.1L893.7,365.9L895.0,365.5L895.6,366.1L895.0,367.3L896.3,369.0L896.9,369.6M888.9,366.7L890.1,367.7L891.3,369.2L893.5,370.3L895.6,369.8L896.9,369.6M895.6,366.1L896.3,364.8L897.1,363.4L897.3,362.8L897.6,360.9L898.6,360.2M897.3,362.8L899.5,362.7L901.1,364.1L901.6,364.1M901.5,364.8L901.5,365.3L902.2,366.5L904.1,367.2L904.8,367.2L902.8,369.2L900.8,369.9L900.2,370.0M900.2,370.0L900.2,373.8M896.9,369.6L895.6,369.8L895.6,372.0L895.6,373.3L898.0,374.8L899.0,375.9M896.9,369.6L898.2,370.2L900.2,370.0M882.9,368.6L885.5,370.3L885.6,369.7L888.1,369.4L890.1,369.0L891.3,369.2M885.5,370.3L885.0,373.0L883.9,375.0L882.9,375.9L881.9,375.8L881.4,376.7M882.9,375.9L882.1,374.4L882.9,373.9L882.5,371.7L882.1,371.1M893.5,370.3L893.7,371.1L892.8,372.3L892.7,373.6L892.5,374.7L892.6,375.7L892.7,376.7L893.5,378.3L892.2,378.5L892.0,380.7L892.9,381.8L891.4,381.0L889.1,381.4L889.1,380.1L887.9,380.3L887.6,377.6L886.1,377.4L885.8,378.1L884.5,378.1L884.2,376.7L881.9,376.7M895.6,373.3L893.3,373.4L892.7,373.6M893.5,378.3L894.9,379.1L895.6,379.2L896.2,380.5L897.9,380.7L899.9,379.8M893.3,373.4L893.5,374.3L892.6,375.7M895.6,379.2L895.0,382.3L895.9,383.7L896.5,384.4L896.5,382.5L896.2,380.5M889.1,381.4L887.8,381.6L887.8,383.8L888.7,384.8L889.9,384.9L891.0,385.1L892.3,383.6L893.3,383.4L895.0,382.3M881.1,384.6L882.5,384.6L885.5,384.6L887.4,385.0L888.7,384.8M889.9,384.9L891.4,386.8L892.6,388.0M893.3,383.4L894.8,384.1L894.8,385.8L893.9,388.2M886.5,389.9L886.5,387.9L887.1,387.9L887.1,385.3L888.7,384.8M894.2,390.7L894.3,391.4M868.9,342.3L869.3,342.5M875.7,334.1L876.2,334.2L877.3,333.8M875.0,334.4L875.6,334.9L876.1,335.4L877.2,335.8M879.7,337.6L879.6,338.0L880.3,338.1L881.4,338.0L882.4,338.4L883.9,338.2L884.5,337.1L883.2,336.3L882.4,336.5M878.0,338.9L879.0,338.6L879.4,338.9L880.3,338.1M877.4,338.7L878.0,337.7L879.7,337.6M882.4,339.2L882.4,338.4M883.9,338.2L884.2,338.5L885.7,338.9L885.8,339.8L883.7,339.5L883.4,340.3M883.1,334.5L883.9,334.8L885.7,335.8L888.1,336.2L887.9,336.8L885.7,337.3L884.5,337.1M881.4,335.2L883.2,336.3L884.5,336.4L885.7,335.8M882.9,333.0L883.1,334.5M886.2,331.3L888.2,331.3L888.8,331.8L888.8,333.0L888.6,333.4L889.1,334.8L888.1,336.2M888.8,331.8L890.4,330.9L890.8,330.1L891.8,329.7M887.1,329.7L889.1,329.5L890.8,330.1M889.3,328.0L890.4,328.1L891.5,328.4M888.8,333.0L889.0,333.9L891.0,333.9L893.3,334.2L894.2,333.4M887.9,336.8L889.4,337.2L890.8,336.9L891.8,339.3L892.8,339.4M890.8,336.9L892.5,337.1L893.0,338.5L893.5,338.4M887.9,336.8L888.1,337.3L887.1,338.7L886.7,338.8L885.7,338.9M887.1,338.7L888.1,340.1L888.2,340.6L889.7,340.8L891.0,340.5L892.1,340.7M886.7,338.8L885.8,339.8L886.2,341.2L886.5,341.7L886.1,342.3M888.1,340.1L888.0,342.0L886.9,343.0L886.5,344.1M888.0,342.0L888.4,342.8L890.6,342.4L891.7,342.2M886.9,343.0L888.4,342.8M880.7,326.9L881.4,324.8L881.4,322.7L882.5,321.1L883.5,319.2L885.3,316.5L886.7,316.0L887.1,315.8L888.9,317.1L889.1,319.7M887.1,315.8L890.3,315.2L891.7,314.6L892.4,316.0L892.0,316.5M879.0,330.8L879.9,331.0M900.5,342.6L901.8,342.9L903.8,342.4M902.0,343.7L902.8,342.8L903.8,343.0L903.8,344.7L904.8,344.2L905.4,345.1M902.7,344.1L903.8,344.7M897.1,346.4L897.4,346.8M898.2,346.4L901.0,346.0L900.3,347.9L898.8,349.0L897.4,349.8L896.7,349.5L896.7,349.1L896.9,348.1L896.9,347.1M898.8,349.0L898.9,350.0M902.7,346.0L903.5,347.1L903.1,348.3L903.6,349.3L904.6,350.8L905.4,351.3M896.6,349.2L896.2,351.9M896.6,350.4L896.9,352.2M902.5,345.0L902.2,344.2M908.6,346.0L910.0,345.3L910.8,345.2L913.3,346.5L913.4,347.3L912.9,348.5L913.1,350.4L913.8,350.8L913.2,351.7L914.4,353.6L913.9,355.1M913.4,347.3L915.6,346.8L916.9,345.9L917.8,346.2L919.8,345.1L920.1,346.4L922.1,346.0L922.4,346.4M913.2,351.7L915.2,351.9L916.7,351.6L917.0,350.7L918.7,350.1L919.1,349.1L919.9,348.5L920.1,346.4M922.4,346.4L923.7,347.4M921.8,348.0L922.1,349.4M908.0,342.0L909.1,342.2L910.0,342.8L909.6,339.7L911.7,339.2L913.3,340.3L915.9,340.8L916.5,341.9L916.9,342.8L917.8,343.0L919.5,342.2L919.8,341.7L921.4,341.8L922.1,341.2L925.8,342.0L925.8,339.7L927.3,339.5L927.6,337.8L929.3,338.0L930.5,336.2M910.0,342.8L911.7,341.6L913.3,342.8L914.2,343.8L915.4,344.7L916.9,345.9M917.8,346.2L917.7,344.2L919.5,343.7L919.5,343.0L921.1,343.2L921.6,344.0L921.6,345.0L922.3,345.0L922.4,346.4M921.6,344.0L923.6,343.2L925.8,342.0M930.5,336.2L932.5,337.6L932.9,339.5L935.8,340.3L936.8,341.5L939.7,341.8L942.0,342.5L945.3,341.7L946.6,340.7L946.3,339.7L947.9,339.7L949.2,338.2L951.7,338.3L950.8,337.2L949.7,335.6M925.8,352.4L925.8,351.2L926.3,351.4M931.0,353.1L931.4,352.9L933.5,353.2M937.0,352.9L937.8,353.3L937.2,355.0L938.0,355.9L938.2,357.3L939.5,357.8L939.9,357.1L940.2,357.0L941.4,357.0L943.1,356.8L944.0,357.7M933.7,358.3L933.9,357.8L934.4,357.0M935.3,355.2L936.8,353.4L937.0,352.9M938.2,357.3L938.9,358.5L937.4,359.0L937.1,359.9L937.9,361.4L938.2,363.6L937.8,365.5M938.9,358.5L939.5,359.2L939.4,360.4L940.2,360.2L941.4,360.0L941.9,361.3L942.4,362.8L943.7,362.5L943.5,362.0L943.0,361.2L942.0,359.8L941.3,359.2L941.8,358.4L940.2,357.0M940.4,364.4L940.3,363.3L941.1,362.8L942.4,362.8M943.7,362.5L943.7,364.1L942.6,364.6L941.9,365.5M938.9,368.1L939.4,368.7L940.1,368.4M954.6,343.8L956.3,342.4L957.2,342.7L958.2,341.9L958.8,342.0M955.9,345.7L957.3,344.9M907.1,355.9L906.9,355.6M909.5,356.9L910.0,355.8L910.1,354.4M907.4,359.5L908.1,361.2L907.5,361.9M901.6,360.7L901.4,361.4M903.8,352.2L904.6,351.6L904.8,351.7M965.5,374.4L965.5,378.9" fill="none" stroke="#dee0e8" stroke-width="0.45" stroke-linejoin="round"/>
<path d="M904.1,339.3L905.4,338.4L906.7,338.2L908.0,338.4L908.2,339.5L906.9,340.1L906.2,340.3L906.7,341.4L907.7,341.8L907.9,343.0L908.6,344.2L908.6,346.0L907.4,346.4L906.2,346.0L905.4,345.7L905.4,344.6L905.7,343.4L905.1,342.4L904.4,341.4L904.1,340.1ZM911.6,338.4L913.3,338.4L913.3,340.1L911.6,340.5Z" fill="#fff" stroke="#dee0e8" stroke-width="0.4" stroke-linejoin="round"/>
<path d="M830.9,324.0L829.0,323.3L826.3,322.2L824.4,321.1L822.4,321.1L823.1,320.0L825.4,319.4L825.7,317.1L822.4,314.7L817.9,314.5L815.2,313.5L814.6,310.3L817.9,309.9L820.5,310.3L823.1,311.2L826.3,312.9L829.0,314.5L829.6,316.0L832.9,318.3L833.2,318.9L831.6,320.0L829.3,320.6L831.2,322.2ZM796.9,312.9L798.2,310.6L802.8,310.7L804.8,311.6L807.1,314.7L804.8,316.2L800.9,316.5L797.3,316.0ZM791.7,312.3L792.7,313.1L795.0,312.9L796.6,311.0L795.6,309.4L792.4,309.1ZM814.6,306.2L822.4,306.5L824.4,303.3L830.3,300.2L832.9,297.3L827.7,296.0L819.8,296.5L813.3,299.0L816.5,301.8ZM810.7,307.9L813.3,308.8L821.1,308.8L821.1,307.3L815.2,306.5L810.7,306.4ZM796.9,308.0L801.5,309.0L804.5,307.6L801.5,306.2L797.6,306.5ZM810.7,311.0L814.6,311.2L814.3,309.5L811.0,309.6ZM806.7,312.9L810.3,312.3L810.0,309.9L806.7,310.3ZM810.7,303.6L815.9,303.3L816.5,300.2L812.6,299.1L810.7,301.0ZM805.4,308.0L809.4,308.3L809.4,306.1L806.1,306.2ZM816.5,322.2L820.5,322.2L821.1,321.1L818.5,319.4L817.2,320.0ZM834.6,337.5L837.1,338.2L838.8,338.3L839.0,337.3L838.4,335.8L837.1,334.0L836.2,334.5L835.5,335.8ZM789.6,334.7L791.7,335.2L792.8,336.8L791.4,336.4ZM786.5,331.7L787.3,331.7L787.8,333.4L787.1,332.8ZM808.0,316.0L810.7,316.0L810.7,314.7L808.7,314.7ZM831.2,335.5L833.0,336.2L832.2,336.1ZM831.4,338.3L832.9,338.5L832.2,338.9Z" fill="#e7e9ef" stroke="#dcdfe7" stroke-width="0.3" stroke-linejoin="round"/>
<path d="M781.3,315.2L785.2,316.0L789.8,314.4L791.7,315.4L798.2,316.5L802.8,317.1L808.0,317.1L810.7,316.5L811.6,312.3L813.3,315.4L815.9,316.5L817.9,315.0L820.1,316.0L819.8,318.3L817.2,319.4L816.5,320.6L814.6,321.7L812.6,323.8L811.6,325.9L812.0,327.2L813.0,328.9L815.9,329.3L817.9,330.5L819.7,330.8L819.8,332.8L821.1,334.3L821.8,333.6L822.0,331.3L823.4,329.3L822.1,327.2L822.8,325.4L822.4,323.4L825.0,323.5L827.7,324.8L828.0,326.9L829.6,327.6L830.9,325.6L832.9,328.4L834.2,330.3L835.8,331.7L836.8,333.1L835.2,334.3L834.2,335.2L830.9,335.2L829.6,336.0L827.7,337.6L830.9,336.3L831.4,336.4L830.9,337.6L831.2,338.7L833.5,339.2L834.2,338.2L832.2,340.0L830.3,341.0L830.3,339.9L829.6,339.6L829.6,339.9L829.1,339.0L829.0,337.7L828.2,337.7L827.3,339.3L826.7,339.7L824.4,339.7L823.4,340.5L821.8,341.1L821.8,341.5L819.5,342.4L819.2,342.2L819.6,341.4L819.5,339.4L818.8,338.9L818.2,338.4L818.0,338.1L815.7,336.9L815.2,337.1L811.6,336.5L811.2,336.3L793.0,336.3L792.9,336.0L790.4,334.5L789.8,333.1L788.2,331.3L788.2,330.9L788.4,329.8L787.1,328.9L786.2,327.4L784.9,326.2L783.5,326.9L782.6,325.9L781.3,325.6Z" fill="#e1e3ea" stroke="#d6d9e2" stroke-width="0.35" stroke-linejoin="round"/>
<path d="M893.5,315.0L895.0,315.5L896.9,315.8L900.2,317.6L900.2,318.9L898.2,319.3L895.6,318.6L895.3,318.9L896.1,321.1L897.6,321.8L898.2,321.2L899.9,321.0L899.5,320.0L900.8,319.0L902.2,319.1L902.3,316.8L903.5,316.9L903.7,318.3L904.8,317.5L908.0,316.5L909.0,316.8L912.0,316.5L912.9,315.1L915.6,315.6L917.2,316.2L917.8,316.5L917.2,313.5L919.1,310.7L921.0,311.4L920.8,314.7L921.6,317.1L922.1,316.0L922.4,311.6L924.4,312.0L926.0,312.3L926.3,310.3L929.6,309.8L930.3,308.3L935.5,306.8L938.8,306.2L941.6,304.5L943.3,305.8L946.6,306.2L947.6,307.6L945.3,309.6L947.2,310.0L950.8,310.3L954.4,310.0L956.4,310.3L958.0,312.0L957.7,313.5L960.3,312.9L963.6,312.9L964.9,311.6L968.8,311.9L971.4,312.9L972.7,313.6L978.0,314.7L979.3,315.2L983.2,315.0L984.8,314.6L984.5,316.0L987.8,315.0L991.0,316.1L993.6,317.7L996.3,318.5L998.0,319.2L997.7,320.2L995.6,321.2L992.3,320.2L991.0,320.6L989.4,320.9L990.4,323.3L987.4,324.0L984.8,325.9L982.2,326.0L980.6,326.0L980.1,327.8L979.6,328.1L980.1,329.6L979.1,330.8L978.0,332.5L977.0,332.7L975.8,334.5L975.3,333.1L975.1,330.8L975.7,328.9L976.7,327.9L978.9,325.5L980.2,324.3L978.3,324.0L976.0,324.2L974.4,326.4L972.7,326.9L970.1,326.5L966.9,326.6L965.2,327.9L963.6,329.3L961.8,331.1L963.3,331.9L964.8,331.5L965.7,332.5L965.2,334.5L965.2,336.7L963.7,338.6L961.9,340.5L960.3,341.5L959.5,341.2L958.8,342.0L959.0,339.9L960.3,339.7L961.6,336.8L960.0,337.4L958.8,336.3L956.7,335.2L955.7,332.8L954.1,332.2L952.1,332.5L951.8,334.0L950.4,335.8L949.7,335.6L948.2,335.2L945.3,336.1L943.3,335.1L940.4,335.0L940.1,334.1L937.8,333.6L937.1,335.4L933.5,334.7L930.9,336.1L930.5,336.2L928.9,335.4L927.6,334.5L925.7,334.7L924.0,332.2L921.4,331.7L919.8,330.5L918.5,330.5L915.9,331.3L913.6,331.9L913.7,334.5L912.6,334.7L909.3,334.5L906.7,333.8L905.1,335.4L904.1,336.9L905.4,338.4L904.1,339.3L904.1,340.1L904.4,341.4L905.1,342.4L903.8,342.4L902.2,341.6L899.5,341.0L898.4,340.2L897.6,339.7L897.4,339.4L898.2,338.4L899.1,337.9L898.4,337.9L899.5,337.1L899.5,335.8L898.2,335.4L896.6,334.9L895.6,333.4L894.2,333.4L894.0,332.2L894.6,331.7L893.7,330.3L891.8,329.7L891.5,328.4L891.4,326.9L891.7,326.4L893.1,326.0L892.0,325.4L893.0,323.8L894.0,322.7L893.0,320.6L892.4,318.3L892.0,316.5L893.5,315.0ZM966.3,331.4L966.9,333.6L967.0,335.8L966.7,338.3L966.3,338.9L966.4,337.1L966.3,334.5ZM907.1,312.5L908.4,313.8L911.0,313.9L910.0,311.2L909.3,310.6L908.0,311.0ZM908.7,310.3L910.0,310.6L912.6,309.0L916.5,306.9L918.5,305.5L916.5,305.5L912.6,306.6L910.0,308.3ZM935.5,302.6L938.8,303.6L942.0,302.6L938.8,300.2L936.1,299.4ZM962.9,307.6L966.9,308.3L971.4,308.0L968.8,306.9L964.2,306.9ZM990.0,313.5L992.3,313.1L991.0,312.8ZM904.1,300.6L909.3,301.0L913.9,299.9L910.0,298.6L906.1,299.4ZM886.3,331.3L888.2,331.3L888.2,330.8L887.1,330.5L886.5,330.9ZM905.1,316.0L906.1,315.6L905.4,315.4Z" fill="#8c91ab"/>
<path d="M941.4,333.9L942.7,333.3L945.0,330.8L945.2,330.0L944.3,331.0L942.3,332.8Z" fill="#fff"/>
<path d="M793.0,336.3L811.2,336.3L811.6,336.5L815.2,337.1L815.7,336.9L818.0,338.1L818.2,338.4L818.8,338.9L819.5,339.4L819.6,341.4L819.2,342.2L819.5,342.4L821.8,341.5L821.8,341.1L823.4,340.5L824.4,339.7L826.7,339.7L827.3,339.3L828.2,337.7L829.0,337.7L829.1,339.0L829.6,339.9L827.7,340.9L827.7,342.4L826.7,342.8L825.0,343.3L824.9,344.2L824.1,345.0L823.7,346.2L824.1,347.6L822.8,348.4L821.4,349.3L820.5,350.4L820.2,351.6L820.9,353.4L821.1,354.7L820.5,355.2L819.8,354.1L819.3,353.0L819.2,352.2L818.3,351.6L817.5,351.7L816.2,351.3L814.9,351.4L815.1,352.2L813.9,352.1L812.1,351.8L811.3,352.2L810.0,353.2L809.9,354.5L808.4,353.4L807.1,351.7L806.1,352.3L805.1,351.8L803.8,350.2L802.7,350.2L802.7,350.6L800.9,350.6L798.4,349.7L796.9,349.7L796.0,348.5L794.7,348.1L793.7,346.4L793.3,345.6L792.4,343.6L792.2,341.8L792.4,338.7L791.9,336.8L793.0,336.9L793.0,336.3ZM763.4,319.9L766.2,318.8L767.5,318.9L766.2,317.6L764.6,316.8L766.9,315.4L771.1,313.1L775.4,314.1L781.3,315.2L781.3,325.6L782.6,325.9L783.5,326.9L784.9,326.2L786.2,327.4L787.1,328.9L788.4,329.8L788.2,330.9L787.8,330.3L786.2,328.9L784.5,327.4L783.5,326.9L781.9,326.1L779.3,325.9L778.0,324.8L776.0,324.8L774.2,326.7L773.1,327.4L772.8,327.1L770.8,328.9L768.8,330.3L766.9,331.1L764.6,332.1L763.3,332.7L764.9,331.5L766.6,330.6L768.2,329.8L769.8,328.4L770.6,327.1L769.8,327.1L767.5,327.1L767.5,325.9L765.6,325.4L764.9,323.8L765.9,322.7L768.2,322.2L768.2,321.1L765.6,321.2L764.6,321.0L763.4,319.9ZM771.5,358.7L772.1,359.0L771.7,359.5L771.5,359.1ZM770.0,357.7L770.3,357.8L770.2,358.0ZM772.4,328.4L773.9,328.0L773.6,328.7L772.6,329.1ZM761.2,322.3L763.0,322.5L762.2,322.8ZM764.1,325.7L765.0,325.7L764.8,326.1Z" fill="#6b7090"/>
<path d="M813.3,338.3L814.9,337.1L815.7,336.6L817.2,337.3L818.1,338.2L817.9,338.4L816.5,338.4L814.9,338.2ZM816.0,342.2L816.5,342.4L817.0,341.4L817.2,339.9L817.9,339.0L817.0,339.1L816.0,340.1ZM818.2,338.9L820.1,338.9L821.1,339.7L820.6,340.0L820.0,341.2L819.5,341.3L818.8,340.5L819.0,339.5ZM819.0,342.4L820.5,342.5L821.8,341.6L821.1,341.5L819.8,342.0ZM821.3,341.1L823.1,341.1L823.5,340.5L822.4,340.6L821.5,340.8Z" fill="#fff"/>
<path d="M839.7,369.7L840.7,371.4L840.7,372.6L841.7,373.1L842.7,373.1L844.3,374.4L846.3,374.6L848.2,375.2L849.2,375.9L850.3,376.3L850.7,377.8L850.4,379.2L849.2,380.5L848.2,381.6L847.9,383.3L847.8,384.9L847.3,386.5L846.6,387.9L846.0,388.6L844.3,388.8L843.0,389.5L841.7,390.6L841.6,392.3L840.7,393.6L839.4,395.2L838.5,396.6L838.4,395.6L837.1,394.3L835.8,393.9L836.8,392.6L838.1,391.5L838.2,390.5L837.7,390.5L837.9,389.3L837.1,389.3L837.0,388.1L835.6,388.0L835.6,386.5L835.4,386.3L835.8,385.1L835.3,384.6L834.2,383.9L834.1,382.1L832.9,381.7L831.2,381.2L830.7,379.5L829.9,379.4L828.5,380.2L827.3,380.2L827.3,379.2L826.2,379.4L825.6,379.1L825.0,377.7L825.6,377.1L825.7,376.1L827.7,375.6L828.0,373.4L827.7,372.2L827.8,371.5L829.6,371.8L830.6,372.1L832.0,371.1L831.2,369.9L833.5,369.6L833.7,369.1L834.2,369.1L834.3,369.6L834.5,370.0L834.3,371.1L835.5,371.6L836.5,371.4L838.1,371.1L839.0,371.0ZM835.3,396.8L836.0,398.5L835.8,399.9L834.2,400.6L832.8,400.5L832.7,402.1L830.9,402.3L831.7,403.5L830.8,404.3L830.6,405.6L829.3,406.4L830.3,408.0L829.3,409.5L828.3,410.8L828.7,412.1L826.3,411.7L825.7,410.4L826.0,409.0L826.5,406.4L826.5,404.3L826.5,402.3L827.0,400.3L827.4,398.3L827.7,396.4L827.7,394.5L828.0,393.0L828.6,391.5L828.8,389.7L829.6,388.6L830.1,387.8L831.4,388.5L832.4,388.0L833.5,389.2L835.8,390.3L835.1,391.7L836.8,391.7L837.7,390.5L838.2,391.2L838.2,391.7L836.9,392.5L835.8,393.9L835.2,396.7ZM828.6,412.4L828.8,413.1L830.8,414.2L828.6,414.5ZM918.0,356.2L919.3,356.7L918.5,357.2L919.5,358.2L920.6,358.0L920.9,358.1L921.0,359.4L921.1,360.6L922.0,362.5L922.4,364.1L923.3,365.9L924.0,367.1L924.5,366.6L925.0,366.3L925.5,365.6L925.8,363.5L925.9,362.0L927.2,361.2L928.9,359.3L930.1,358.6L930.3,357.8L931.6,357.5L931.6,357.0L931.4,355.7L931.0,354.7L932.1,354.5L932.1,355.0L933.7,355.2L933.7,355.7L933.1,356.0L933.1,356.5L933.7,356.3L934.0,357.4L934.4,357.0L934.4,356.0L935.3,355.2L935.6,354.1L937.0,352.9L936.1,352.1L934.8,352.3L933.5,353.2L933.5,353.9L932.1,354.0L931.4,353.6L931.0,353.1L930.9,354.2L928.9,354.0L927.6,353.4L925.8,352.4L926.3,351.4L925.0,350.8L924.9,349.7L925.0,348.1L923.7,347.4L921.8,348.0L922.1,349.4L922.6,349.8L922.1,350.8L921.1,351.6L919.8,353.0L918.8,353.8L919.3,354.7L919.8,355.6ZM867.6,342.3L868.0,342.2L869.3,342.5L868.9,343.0L868.6,344.2L868.8,345.3L868.6,346.0L867.6,346.2L867.6,345.0L867.2,344.8L867.6,343.0Z" fill="#8c91ab"/>
<path d="M948.0,387.8L949.7,386.9L951.2,386.5L952.8,385.8L953.3,384.5L954.2,383.9L955.4,382.6L956.4,382.2L957.4,382.9L958.2,382.9L958.6,381.6L958.9,381.2L960.0,380.5L961.8,381.0L962.8,381.0L962.3,382.1L961.9,383.0L963.3,383.7L964.4,384.7L965.4,384.7L965.9,383.0L966.0,381.4L966.5,380.0L967.0,381.2L967.3,382.5L968.4,383.0L968.7,384.3L969.0,385.6L970.4,386.5L971.1,387.9L971.9,389.0L973.3,390.2L973.5,391.7L973.8,392.8L973.4,394.5L972.7,395.9L972.2,396.8L971.6,398.3L971.4,399.3L970.1,399.8L969.1,400.8L968.0,400.0L967.2,400.5L965.9,400.1L964.9,399.3L964.6,398.2L963.7,398.0L963.6,396.4L963.5,397.6L963.5,395.9L962.3,397.4L961.8,397.2L961.1,395.9L959.3,394.9L957.7,394.9L955.7,395.5L954.4,396.0L954.1,396.7L951.8,396.7L950.5,397.5L949.2,397.5L948.6,397.0L949.0,395.2L948.6,393.7L948.0,391.9L947.4,390.8L947.7,389.3L947.7,388.3ZM968.0,402.1L969.1,402.4L970.2,402.2L970.3,403.3L969.7,404.3L968.8,404.3L968.4,403.3ZM884.2,392.7L884.6,393.7L885.3,395.9L885.4,396.9L886.5,397.4L888.1,396.8L890.1,396.8L890.7,396.6L892.0,395.9L893.0,394.7L893.7,393.7L894.6,392.6L894.9,391.4L894.3,391.4L894.2,390.7L893.9,388.2L892.6,388.0L891.0,389.1L890.1,390.6L888.4,390.3L887.0,391.4L886.5,389.9L886.5,392.6L884.8,392.8ZM872.2,341.0L872.6,340.0L872.7,338.9L872.0,337.8L870.5,337.3L870.3,336.7L871.4,336.4L872.4,336.5L872.2,335.6L872.6,335.9L873.5,335.8L874.4,335.1L874.4,334.6L875.0,334.4L876.1,335.4L876.6,335.4L877.2,335.8L877.6,335.8L878.8,336.3L878.4,337.5L878.0,337.7L877.4,338.7L878.0,338.9L878.0,339.5L878.4,340.5L878.3,340.7L877.3,341.3L876.0,341.0L875.4,341.8L873.9,341.5ZM878.0,332.2L878.1,333.1L877.3,333.8L877.3,334.7L877.5,335.6L877.6,335.8L878.8,336.3L878.4,337.5L879.7,337.6L880.3,337.7L881.9,337.6L882.4,336.5L881.4,335.2L883.1,334.5L883.2,334.3L882.9,333.0L882.7,331.8L881.6,331.3L880.6,331.7L879.9,331.0L879.0,330.8L879.2,331.4L879.0,332.0ZM879.0,341.9L879.6,341.4L879.6,342.5L879.2,342.6Z" fill="#6b7090"/>
<path d="M891.2,393.4L892.1,392.8L892.6,393.4L891.8,394.2Z" fill="#f4f5f8"/>
<path d="M889.7,350.4L889.7,357.4L897.5,357.4L896.6,356.0L895.3,353.2L894.6,351.6L895.0,352.7L895.8,353.2L896.2,351.9L895.7,350.6L894.5,350.7L893.7,350.4L892.4,350.9ZM896.2,352.0L896.9,352.2L897.9,351.6L898.2,351.2L897.6,350.4L898.9,350.0L899.8,350.1L900.8,350.7L902.6,352.2L903.8,352.2L904.4,352.3L905.0,352.7L905.4,353.4L906.2,354.1L906.1,355.2L906.6,355.5L907.1,355.7L907.1,355.9L907.8,356.8L909.5,356.9L909.8,357.4L909.3,358.8L907.4,359.5L905.4,359.8L904.1,360.9L902.2,360.7L901.6,360.7L901.4,361.4L900.5,360.2L899.0,357.9L898.4,356.1L897.4,354.7L896.4,353.0ZM867.4,341.2L868.2,340.8L871.1,341.0L872.2,341.0L873.9,341.5L875.4,341.8L875.5,342.3L873.9,343.2L873.2,344.2L873.5,344.8L872.9,345.7L872.1,346.4L870.5,346.4L869.7,347.0L869.3,346.5L868.6,346.0L868.5,345.4L868.8,345.3L868.6,344.2L868.9,343.0L869.3,342.5L868.0,342.2L867.6,342.3Z" fill="#b7bacb"/>
<path d="M890.4,343.8L890.6,344.2L891.2,345.0L891.2,346.4L892.4,346.8L893.4,346.4L894.6,346.9L895.9,346.4L897.1,346.4L896.9,347.1L897.4,346.8L898.2,346.4L899.5,346.2L901.0,346.0L902.7,346.0L902.5,345.0L902.2,344.2L902.7,344.1L902.0,343.7L901.8,342.9L901.2,342.6L900.5,342.6L898.6,343.0L897.3,342.8L896.3,342.2L895.3,342.2L894.0,342.8L892.4,342.8L891.7,342.2L890.7,342.2L890.6,343.1ZM869.5,347.1L872.0,347.7L872.3,348.9L872.6,349.9L871.0,350.4L871.0,351.0L869.8,351.7L867.7,352.5L867.7,353.3L864.9,353.3L865.9,352.7L866.9,351.9L867.1,350.8L867.8,349.1L869.0,348.5Z" fill="#c3c6d3"/>
<path d="M935.7,368.8L937.1,369.1L938.9,370.7L941.0,372.6L941.7,374.0L942.7,374.9L942.5,376.6L941.7,376.6L940.3,375.4L939.1,373.7L937.9,371.5L936.8,370.4ZM942.1,377.3L943.0,376.7L944.3,377.2L945.8,377.1L947.0,377.4L948.2,378.0L948.2,378.6L945.9,378.3L944.0,378.0L942.9,377.7ZM945.0,371.3L945.6,372.0L946.5,372.0L947.1,371.6L947.9,371.6L948.4,371.1L948.7,370.6L948.9,369.8L950.2,369.8L950.4,370.3L950.5,371.1L951.2,372.0L950.4,372.1L950.2,373.2L949.5,373.7L949.3,374.8L949.2,375.4L948.3,375.4L948.2,375.0L947.2,374.8L946.5,375.0L945.4,374.6L945.3,373.7L944.8,373.0L944.6,372.3L944.6,371.4ZM951.7,372.1L952.5,371.8L954.4,372.0L955.2,371.6L954.4,372.4L952.1,372.3L952.5,373.3L954.0,373.3L953.0,373.9L953.6,375.6L953.5,376.3L952.8,375.8L952.5,374.5L952.0,374.6L952.1,376.4L951.4,376.3L951.5,375.0L951.0,374.6L951.4,373.5ZM948.3,378.2L949.7,378.3L951.2,378.3L951.2,378.7L949.9,378.8L948.6,378.7ZM951.7,378.4L953.8,378.3L953.8,378.6L951.8,378.7ZM951.2,379.2L952.3,379.4L951.8,379.6ZM954.1,379.7L955.1,378.9L955.2,379.2L954.6,379.6ZM956.7,371.4L957.2,371.6L957.5,372.4L957.0,373.2L956.8,372.3ZM957.0,374.7L958.9,374.8L958.4,375.1L957.2,375.0ZM955.7,374.8L956.5,374.9L956.3,375.2ZM959.0,373.2L960.1,372.9L961.0,373.2L961.2,374.2L961.6,374.9L963.3,373.7L965.5,374.4L965.5,378.9L964.8,378.2L963.6,378.3L964.1,377.4L963.6,376.4L961.9,375.7L960.6,375.2L960.2,375.4L960.3,374.4L959.7,374.6L959.1,373.7ZM942.2,373.8L943.1,374.4L942.7,374.7ZM961.1,376.5L961.5,376.7L961.2,377.3Z" fill="#474c6c"/>
<path d="M958.9,348.5L960.0,347.5L961.9,347.3L962.9,346.0L964.2,345.4L964.9,343.4L965.7,342.7L966.2,344.2L965.5,345.4L965.4,347.0L964.9,347.8L964.0,348.0L962.9,348.1L962.1,348.9L961.6,348.1L960.0,348.4ZM958.2,349.1L959.0,348.7L959.5,349.4L959.0,350.7L958.5,350.6ZM960.0,348.7L961.3,348.4L961.1,349.1L960.2,349.4ZM964.9,342.5L965.1,341.2L966.0,339.4L966.9,340.3L968.4,340.4L968.5,341.1L967.2,342.2L965.5,341.9ZM956.9,354.0L957.2,353.9L956.9,354.4Z" fill="#343959"/>
</g>
<rect x="748" y="396.8" width="12.2" height="18.2" rx="2" fill="#f3f4f7" stroke="#e4e6ec" stroke-width="0.8"/>
<path d="M751.6,401.2h5.4M754.3,398.5v5.4" stroke="#5a5f70" stroke-width="1.2" fill="none"/>
<path d="M751.8,410h5" stroke="#8a8e9c" stroke-width="1.3" fill="none"/></svg>
<div class="t" style="left:361.8px;width:300px;text-align:center;top:465.71px;font-size:10.6px;line-height:13.78px;font-weight:bold;color:#1a1c21;letter-spacing:-0.28px;">Homepage</div>
<div class="t" style="left:505.29999999999995px;width:300px;text-align:center;top:465.71px;font-size:10.6px;line-height:13.78px;font-weight:bold;color:#1a1c21;letter-spacing:-0.28px;">Login process</div>
<div class="t" style="left:361.8px;width:300px;text-align:center;top:534.11px;font-size:10.6px;line-height:13.78px;font-weight:bold;color:#1a1c21;letter-spacing:-0.28px;">Stock API</div>
<div class="t" style="left:501.6px;width:300px;text-align:center;top:534.11px;font-size:10.6px;line-height:13.78px;font-weight:bold;color:#1a1c21;letter-spacing:-0.28px;">Order process</div>
<div class="t" style="left:757.4px;top:460.37px;font-size:10.2px;line-height:13.26px;font-weight:normal;color:#343741;letter-spacing:0px;">10:52 AM</div>
<div class="t" style="left:813.8px;top:460.24px;font-size:10.4px;line-height:13.52px;font-weight:normal;color:#343741;letter-spacing:0px;">Order process</div>
<div class="t" style="right:81.3px;top:460.24px;font-size:10.4px;line-height:13.52px;font-weight:normal;color:#343741;letter-spacing:0px;">9,255 ms</div>
<div class="t" style="left:954px;top:460.24px;font-size:10.4px;line-height:13.52px;font-weight:normal;color:#343741;letter-spacing:0px;">New York</div>
<div class="t" style="left:757.4px;top:479.99px;font-size:10.2px;line-height:13.26px;font-weight:normal;color:#343741;letter-spacing:0px;">10:51 AM</div>
<div class="t" style="left:813.8px;top:479.86px;font-size:10.4px;line-height:13.52px;font-weight:normal;color:#343741;letter-spacing:0px;">Order process</div>
<div class="t" style="right:81.3px;top:479.86px;font-size:10.4px;line-height:13.52px;font-weight:normal;color:#343741;letter-spacing:0px;">12,212 ms</div>
<div class="t" style="left:954px;top:479.86px;font-size:10.4px;line-height:13.52px;font-weight:normal;color:#343741;letter-spacing:0px;">Miami</div>
<div class="t" style="left:757.4px;top:499.61px;font-size:10.2px;line-height:13.26px;font-weight:normal;color:#343741;letter-spacing:0px;">10:49 AM</div>
<div class="t" style="left:813.8px;top:499.48px;font-size:10.4px;line-height:13.52px;font-weight:normal;color:#343741;letter-spacing:0px;">Homepage</div>
<div class="t" style="right:81.3px;top:499.48px;font-size:10.4px;line-height:13.52px;font-weight:normal;color:#343741;letter-spacing:0px;">2,142 ms</div>
<div class="t" style="left:954px;top:499.48px;font-size:10.4px;line-height:13.52px;font-weight:normal;color:#343741;letter-spacing:0px;">Vienna</div>
<div class="t" style="left:757.4px;top:519.23px;font-size:10.2px;line-height:13.26px;font-weight:normal;color:#343741;letter-spacing:0px;">10:48 AM</div>
<div class="t" style="left:813.8px;top:519.10px;font-size:10.4px;line-height:13.52px;font-weight:normal;color:#343741;letter-spacing:0px;">Stock API</div>
<div class="t" style="right:81.3px;top:519.10px;font-size:10.4px;line-height:13.52px;font-weight:normal;color:#343741;letter-spacing:0px;">1,163 ms</div>
<div class="t" style="left:954px;top:519.10px;font-size:10.4px;line-height:13.52px;font-weight:normal;color:#343741;letter-spacing:0px;">Medellín</div>
<div class="t" style="left:757.4px;top:538.85px;font-size:10.2px;line-height:13.26px;font-weight:normal;color:#343741;letter-spacing:0px;">10:46 AM</div>
<div class="t" style="left:813.8px;top:538.72px;font-size:10.4px;line-height:13.52px;font-weight:normal;color:#343741;letter-spacing:0px;">Homepage</div>
<div class="t" style="right:81.3px;top:538.72px;font-size:10.4px;line-height:13.52px;font-weight:normal;color:#343741;letter-spacing:0px;">2,492 ms</div>
<div class="t" style="left:954px;top:538.72px;font-size:10.4px;line-height:13.52px;font-weight:normal;color:#343741;letter-spacing:0px;">Moscow</div>
<div class="t" style="left:757.4px;top:558.47px;font-size:10.2px;line-height:13.26px;font-weight:normal;color:#343741;letter-spacing:0px;">10:45 AM</div>
<div class="t" style="left:813.8px;top:558.34px;font-size:10.4px;line-height:13.52px;font-weight:normal;color:#343741;letter-spacing:0px;">Order process</div>
<div class="t" style="right:81.3px;top:558.34px;font-size:10.4px;line-height:13.52px;font-weight:normal;color:#343741;letter-spacing:0px;">10,021 ms</div>
<div class="t" style="left:954px;top:558.34px;font-size:10.4px;line-height:13.52px;font-weight:normal;color:#343741;letter-spacing:0px;">Beijing</div>
<div class="t" style="left:757.4px;top:578.09px;font-size:10.2px;line-height:13.26px;font-weight:normal;color:#343741;letter-spacing:0px;">10:45 AM</div>
<div class="t" style="left:813.8px;top:577.96px;font-size:10.4px;line-height:13.52px;font-weight:normal;color:#343741;letter-spacing:0px;">Login process</div>
<div class="t" style="right:81.3px;top:577.96px;font-size:10.4px;line-height:13.52px;font-weight:normal;color:#343741;letter-spacing:0px;">8,542 ms</div>
<div class="t" style="left:954px;top:577.96px;font-size:10.4px;line-height:13.52px;font-weight:normal;color:#343741;letter-spacing:0px;">Sydney</div>
</div>
</body></html>
